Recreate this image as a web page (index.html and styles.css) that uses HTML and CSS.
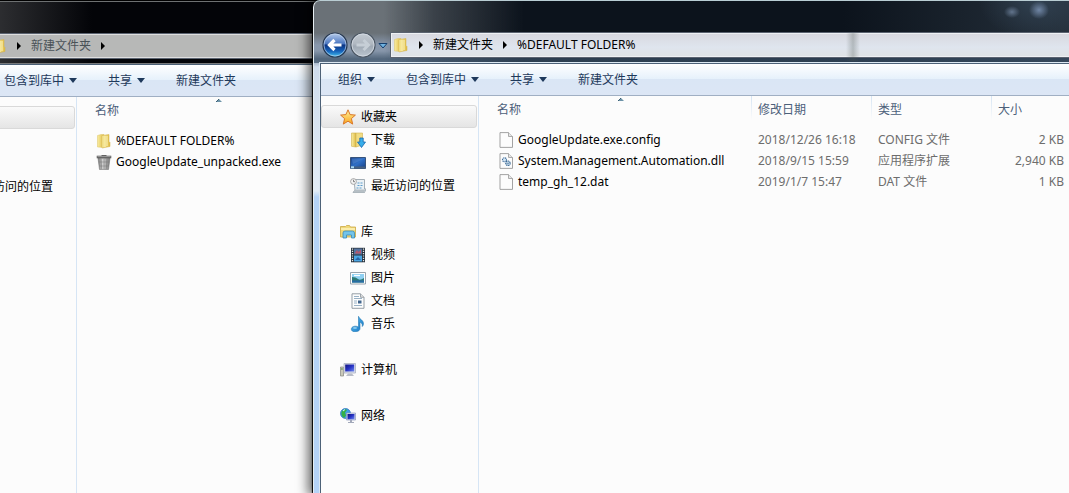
FILE: index.html
```html
<!DOCTYPE html>
<html lang="zh-CN">
<head>
<meta charset="utf-8">
<title>%DEFAULT FOLDER%</title>
<link rel="stylesheet" href="styles.css">
</head>
<body>
<svg class="defs" aria-hidden="true">
  <defs>
    <linearGradient id="gold" x1="0" x2="1"><stop offset="0" stop-color="#f9eda0"/><stop offset="1" stop-color="#dfba45"/></linearGradient>
    <linearGradient id="star" x1="0" y1="0" x2="0" y2="1"><stop offset="0" stop-color="#fff3a0"/><stop offset="1" stop-color="#f9a51c"/></linearGradient>
    <linearGradient id="screen" x1="0" y1="0" x2="1" y2="1"><stop offset="0" stop-color="#1a3f86"/><stop offset=".5" stop-color="#2f6fc6"/><stop offset="1" stop-color="#163c80"/></linearGradient>
    <linearGradient id="navy" x1="0" y1="0" x2="1" y2="1"><stop offset="0" stop-color="#10127e"/><stop offset=".5" stop-color="#2733c4"/><stop offset="1" stop-color="#6f8af0"/></linearGradient>
    <linearGradient id="bin" x1="0" x2="1"><stop offset="0" stop-color="#777"/><stop offset=".4" stop-color="#d4d4d4"/><stop offset="1" stop-color="#777"/></linearGradient>
    <linearGradient id="note" x1="0" y1="0" x2="1" y2="1"><stop offset="0" stop-color="#5cc0f2"/><stop offset="1" stop-color="#1574c4"/></linearGradient>
    <linearGradient id="orb" x1="0" y1="0" x2="0" y2="1"><stop offset="0" stop-color="#b9cdec"/><stop offset=".45" stop-color="#4a76c0"/><stop offset=".5" stop-color="#0b3382"/><stop offset=".75" stop-color="#1560b8"/><stop offset="1" stop-color="#45c4f2"/></linearGradient>
    <linearGradient id="orb-off" x1="0" y1="0" x2="0" y2="1"><stop offset="0" stop-color="#c3cad2"/><stop offset=".45" stop-color="#b0b8c1"/><stop offset=".55" stop-color="#9fa9b4"/><stop offset="1" stop-color="#bcc6d0"/></linearGradient>
    <symbol id="i-folder" viewBox="0 0 16 16"><path d="M1.500 2.500 5 1.500h3v13l-6.500-.5z" fill="url(#gold)" stroke="#dcc264" stroke-width=".5"/><path d="M6 2.500 13 1.500v7l1 1v4L6 15z" fill="url(#gold)" stroke="#d2b04a" stroke-width=".5"/><path d="M9 3v11M11 3v10" stroke="#fbf3b8" stroke-width="1"/></symbol>
    <symbol id="i-bin" viewBox="0 0 16 16"><path d="M2 4h12l-1.500 11.500h-9z" fill="url(#bin)" stroke="#777" stroke-width=".6"/><path d="M5 5l.7 10M8 5v10M11 5l-.7 10M3 8h10M3.500 12h9" stroke="#777" stroke-width=".5"/><path d="M.7 1.700h14.600v2.600H.7z" fill="#666"/><path d="M5.500 1h5v1h-5z" fill="#555"/><path d="M1.500 2.300h13" stroke="#bbb" stroke-width=".7"/></symbol>
    <symbol id="i-star" viewBox="0 0 16 16"><path d="M8 .8l2.100 4.800 5.300.5-4 3.500 1.300 5.500L8 12.200l-4.700 2.900 1.300-5.500-4-3.500 5.300-.5z" fill="url(#star)" stroke="#d9772a" stroke-linejoin="round"/></symbol>
    <symbol id="i-down" viewBox="0 0 16 16"><path d="M1.500 1H6v14l-4.500-.7z" fill="url(#gold)" stroke="#cfae4c" stroke-width=".6"/><path d="M6 1h6.500V13L6 15z" fill="#f1dc83" stroke="#d2b24c" stroke-width=".6"/><path d="M9.800 6h3.400v4h2.300l-4 5.500L7.500 10h2.300z" fill="#38aeea" stroke="#1766ac" stroke-width=".8"/></symbol>
    <symbol id="i-desktop" viewBox="0 0 16 16"><path d="M.5 2.500h15v11H.5z" fill="url(#screen)" stroke="#38547c"/><path d="M1 11.500h14v2H1z" fill="#47607f"/><path d="M1 11.300h3v2H1z" fill="#a8d8f4"/><path d="M1.500 3.500h13L3 9z" fill="#5f95dc" opacity=".4"/></symbol>
    <symbol id="i-recent" viewBox="0 0 16 16"><path d="M4 1.500h10.500v9.500H16l-1.500 3.500H3L5 12z" fill="#eaf1f5" stroke="#8f9ba3" stroke-width=".8"/><path d="M7.500 5h5M7.500 7.500h5M6.500 10h6" stroke="#5e9dcc" stroke-width="1.200" stroke-dasharray="2 1"/><path d="M3 14.500h11l1.500-3H5z" fill="#b6bfc5"/><circle cx="3.500" cy="3.500" r="2.900" fill="#f4f4f4" stroke="#949494" stroke-width=".8"/><path d="M3.500 1.800v1.900H5" fill="none" stroke="#555" stroke-width=".7"/></symbol>
    <symbol id="i-library" viewBox="0 0 16 16"><path d="M.5 2.500h5l1-1h3l1 1.500h5v10H.5z" fill="#f0d878" stroke="#cba844" stroke-width=".8"/><path d="M1 5h14" stroke="#fff5bd" stroke-width="1.500"/><path d="M3 14V9q0-2 2-2h7.500q2 0 2 2v5h-3v-3h-5v3z" fill="#74c4ea" stroke="#3b8bb8" stroke-width=".8"/></symbol>
    <symbol id="i-video" viewBox="0 0 16 16"><path d="M1 .8h14v14.500H1z" fill="#26303b"/><path d="M4 1.500h8v6H4z" fill="#54739f"/><path d="M4 8.500h8v6H4z" fill="#4aa5e3"/><path d="M5 6l2-3 1.500 2L11 2.500v4H5z" fill="#b4576c"/><path d="M5 13l3-3 3 3z" fill="#2565a7"/><path d="M2.500 1.500v14M13.500 1.500v14" stroke="#e0e6e9" stroke-width="1.300" stroke-dasharray="1.200 1.100"/></symbol>
    <symbol id="i-picture" viewBox="0 0 16 16"><path d="M.5 2.500h15v11.500H.5z" fill="#fff" stroke="#8e9aa4" stroke-width=".9"/><path d="M2 4h12v8.500H2z" fill="#8fd0f2"/><path d="M2 7q4 0 6 2t6-1v4.500H2z" fill="#2e7b76"/><path d="M2 10.500h12v2H2z" fill="#286ba4"/><path d="M4 5.500h6" stroke="#fff" stroke-width="1.300"/></symbol>
    <symbol id="i-doc" viewBox="0 0 16 16"><path d="M2 .8h8.500l3.500 3.500v11H2z" fill="#fdfdfd" stroke="#8b949c" stroke-width=".9"/><path d="M10.500.8v3.500H14" fill="#ddd" stroke="#8b949c" stroke-width=".8"/><path d="M4 3.500h5M4 5.500h8M4 8h3M4 10h3M4 12.500h8" stroke="#8fa9bf" stroke-width=".9"/><path d="M8 7.500h3.500v3H8z" fill="#41658d"/></symbol>
    <symbol id="i-music" viewBox="0 0 16 16"><path d="M8.500.3c.5 3 5 3.500 5 7.200 0 1.200-.4 2.200-1.200 3 .4-3-1.300-3.900-2.300-4.300v6.300c0 4-8.700 4.400-8.700.7 0-2.800 4-3.800 7.200-2.300z" fill="url(#note)" stroke="#2478b4" stroke-width=".6"/><ellipse cx="5" cy="12" rx="2" ry="1" fill="#a9def8" opacity=".7"/></symbol>
    <symbol id="i-computer" viewBox="0 0 16 16"><path d="M.5 5h3v9h-3z" fill="#cac9b9" stroke="#85867f" stroke-width=".7"/><path d="M1 7h1.800" stroke="#4b8b3a"/><path d="M4 1.500h11.500v9.500H4z" fill="#dcdfeb" stroke="#aab0c2" stroke-width=".8"/><path d="M5.200 2.500h9v7h-9z" fill="url(#navy)"/><path d="M8 11.500h4l2 2.500H6z" fill="#b9bdc8"/></symbol>
    <symbol id="i-network" viewBox="0 0 16 16"><circle cx="5.500" cy="5.500" r="5" fill="#3aa1e4" stroke="#2b6bbb" stroke-width=".7"/><path d="M2 3q3-3 5-1L5 4.500l1 3L4 10Q0 7 2 3z" fill="#35b046"/><path d="M3 3l2-1.500" stroke="#d9f6ff"/><path d="M6.500 5h9v7h-9z" fill="#d9dded" stroke="#8d98bd" stroke-width=".7"/><path d="M7.500 6h7v5.300h-7z" fill="url(#navy)"/><path d="M10 12h2v2h2v1H8v-1h2z" fill="#a3a9ba"/></symbol>
    <symbol id="i-file" viewBox="0 0 16 16"><path d="M2 .6h8.500L14.500 4.500v10.900H2z" fill="#fcfcfc" stroke="#999" stroke-width=".9"/><path d="M10.500.6v3.900h4" fill="#e6e6e6" stroke="#999" stroke-width=".8"/></symbol>
    <symbol id="i-dll" viewBox="0 0 16 16"><path d="M2 .6h8.500L14.500 4.500v10.900H2z" fill="#fcfcfc" stroke="#999" stroke-width=".9"/><path d="M10.500.6v3.900h4" fill="#e6e6e6" stroke="#999" stroke-width=".8"/><circle cx="6.500" cy="6.800" r="2" fill="#d6e6f4" stroke="#44719d" stroke-width="1.100" stroke-dasharray="1.200 .6"/><circle cx="10" cy="10.300" r="2.200" fill="#d6e6f4" stroke="#33638f" stroke-width="1.200" stroke-dasharray="1.200 .6"/><circle cx="10" cy="10.300" r=".7" fill="#33638f"/></symbol>
    <symbol id="i-back" viewBox="0 0 26 26"><circle cx="13" cy="13" r="12" fill="url(#orb)" stroke="#26374f" stroke-width="1.200"/><circle cx="13" cy="13" r="11" fill="none" stroke="#c8daf0" stroke-width=".8" opacity=".8"/><path d="M19.500 13H8M12.500 8L7.500 13l5 5" fill="none" stroke="#fff" stroke-width="3.200"/></symbol>
    <symbol id="i-fwd" viewBox="0 0 26 26"><circle cx="13" cy="13" r="12" fill="url(#orb-off)" stroke="#4a5562" stroke-width="1.200"/><circle cx="13" cy="13" r="11" fill="none" stroke="#d5dce4" stroke-width=".8"/><path d="M6.500 13H18M13.500 8l5 5-5 5" fill="none" stroke="#c6ced6" stroke-width="3"/></symbol>
    <symbol id="i-menu" viewBox="0 0 10 8"><path d="M1 1.500h8L5 6z" fill="#6fb2e0" stroke="#153f6e"/></symbol>
    <symbol id="i-caret" viewBox="0 0 8 5"><path d="M0 0h8L4 5z" fill="#1e395b"/></symbol>
    <symbol id="i-crumb" viewBox="0 0 4 8"><path d="M0 0l4 4-4 4z" fill="#000"/></symbol>
    <symbol id="i-sort" viewBox="0 0 8 4"><path d="M1 4L4 1l3 3z" fill="#6d93a8"/><path d="M1 4l3-3" stroke="#3c6075"/></symbol>
  </defs>
</svg>
<main class="desktop">
  <section class="window window-back" aria-label="新建文件夹">
    <header class="glass">
      <nav class="address" aria-label="地址">
        <svg class="icon"><use href="#i-folder"/></svg>
        <svg class="crumb"><use href="#i-crumb"/></svg>
        <button>新建文件夹</button>
        <svg class="crumb"><use href="#i-crumb"/></svg>
      </nav>
    </header>
    <div class="client">
      <div class="toolbar">
        <button>包含到库中<svg><use href="#i-caret"/></svg></button>
        <button>共享<svg><use href="#i-caret"/></svg></button>
        <button>新建文件夹</button>
      </div>
      <div class="panes">
        <nav class="sidebar" aria-label="导航">
          <ul>
            <li><button class="root selected" aria-label="收藏夹"><svg class="icon"><use href="#i-star"/></svg></button></li>
            <li><button aria-label="下载"><svg class="icon"><use href="#i-down"/></svg></button></li>
            <li><button aria-label="桌面"><svg class="icon"><use href="#i-desktop"/></svg></button></li>
            <li><button><svg class="icon"><use href="#i-recent"/></svg>最近访问的位置</button></li>
          </ul>
        </nav>
        <div class="files">
          <table>
            <thead><tr><th class="name sorted">名称<svg class="sort"><use href="#i-sort"/></svg></th></tr></thead>
            <tbody>
              <tr><td class="file"><svg class="icon"><use href="#i-folder"/></svg>%DEFAULT FOLDER%</td></tr>
              <tr><td class="file"><svg class="icon"><use href="#i-bin"/></svg>GoogleUpdate_unpacked.exe</td></tr>
            </tbody>
          </table>
        </div>
      </div>
    </div>
  </section>

  <section class="window window-front" aria-label="%DEFAULT FOLDER%">
    <header class="glass">
      <button class="orb" aria-label="返回"><svg><use href="#i-back"/></svg></button>
      <button class="orb" aria-label="前进"><svg><use href="#i-fwd"/></svg></button>
      <button class="history" aria-label="历史"><svg><use href="#i-menu"/></svg></button>
      <nav class="address" aria-label="地址">
        <svg class="icon"><use href="#i-folder"/></svg>
        <svg class="crumb"><use href="#i-crumb"/></svg>
        <button>新建文件夹</button>
        <svg class="crumb"><use href="#i-crumb"/></svg>
        <button>%DEFAULT FOLDER%</button>
      </nav>
    </header>
    <div class="client">
      <div class="toolbar">
        <button>组织<svg><use href="#i-caret"/></svg></button>
        <button>包含到库中<svg><use href="#i-caret"/></svg></button>
        <button>共享<svg><use href="#i-caret"/></svg></button>
        <button>新建文件夹</button>
      </div>
      <div class="panes">
        <nav class="sidebar" aria-label="导航">
          <ul>
            <li><button class="root selected"><svg class="icon"><use href="#i-star"/></svg>收藏夹</button></li>
            <li><button><svg class="icon"><use href="#i-down"/></svg>下载</button></li>
            <li><button><svg class="icon"><use href="#i-desktop"/></svg>桌面</button></li>
            <li><button><svg class="icon"><use href="#i-recent"/></svg>最近访问的位置</button></li>
          </ul>
          <ul>
            <li><button class="root"><svg class="icon"><use href="#i-library"/></svg>库</button></li>
            <li><button><svg class="icon"><use href="#i-video"/></svg>视频</button></li>
            <li><button><svg class="icon"><use href="#i-picture"/></svg>图片</button></li>
            <li><button><svg class="icon"><use href="#i-doc"/></svg>文档</button></li>
            <li><button><svg class="icon"><use href="#i-music"/></svg>音乐</button></li>
          </ul>
          <ul>
            <li><button class="root"><svg class="icon"><use href="#i-computer"/></svg>计算机</button></li>
          </ul>
          <ul>
            <li><button class="root"><svg class="icon"><use href="#i-network"/></svg>网络</button></li>
          </ul>
        </nav>
        <div class="files">
          <table>
            <thead><tr><th class="name sorted">名称<svg class="sort"><use href="#i-sort"/></svg></th><th class="date">修改日期</th><th class="type">类型</th><th>大小</th></tr></thead>
            <tbody>
              <tr><td class="file"><svg class="icon"><use href="#i-file"/></svg>GoogleUpdate.exe.config</td><td>2018/12/26 16:18</td><td>CONFIG 文件</td><td class="size">2 KB</td></tr>
              <tr><td class="file"><svg class="icon"><use href="#i-dll"/></svg>System.Management.Automation.dll</td><td>2018/9/15 15:59</td><td>应用程序扩展</td><td class="size">2,940 KB</td></tr>
              <tr><td class="file"><svg class="icon"><use href="#i-file"/></svg>temp_gh_12.dat</td><td>2019/1/7 15:47</td><td>DAT 文件</td><td class="size">1 KB</td></tr>
            </tbody>
          </table>
        </div>
      </div>
    </div>
  </section>
</main>
</body>
</html>
```

FILE: styles.css
```css
* {
  box-sizing: border-box;
}

body {
  margin: 0;
  background: #000;
  color: #000;
  font: 12px/16px "Noto Sans", "Noto Sans CJK SC", sans-serif;
}

button {
  display: flex;
  align-items: center;
  padding: 0;
  border: 0;
  background: none;
  color: inherit;
  font: inherit;
  white-space: nowrap;
}

svg {
  display: block;
  flex: none;
}

.defs {
  position: absolute;
  width: 0;
  height: 0;
}

.icon {
  width: 16px;
  height: 16px;
}

.desktop {
  position: relative;
  height: 100vh;
  overflow: hidden;
}

/* Windows */
.window {
  position: absolute;
  right: 0;
  bottom: 0;
  display: flex;
  flex-direction: column;
  padding-left: 6px;
  border-top: 1px solid #b9cdd3;
  border-left: 1px solid #e6eef2;
}

.window-back {
  top: 1px;
  left: -89px;
  border-top-color: #6d7071;
  background: linear-gradient(90deg, #303134 80px, #030408 180px);
}

.window-front {
  top: 0;
  left: 313px;
  border-radius: 7px 0 0;
  background: linear-gradient(#6a7177 32px, #8897ac 44px, #8696a9 58px, #cfdcec 66px, #e2ecf6 190px, #b5d3f7 196px);
  box-shadow: -1px 0 1px #000, -2px 0 12px 3px rgba(0, 0, 0, .6);
}

.glass {
  display: flex;
  align-items: flex-end;
  height: 62px;
  margin-left: -6px;
  padding: 0 0 6px 8px;
}

.window-back .glass {
  padding-left: 77px;
}

.window-front .glass {
  border-radius: 6px 0 0;
  background:
    radial-gradient(ellipse 8px 6px at calc(100% - 57px) 11px, #62748c, transparent),
    radial-gradient(ellipse 10px 9px at calc(100% - 30px) 9px, #7086a5, transparent),
    radial-gradient(ellipse 60px 40px at calc(100% - 30px) 0, #304050, transparent),
    linear-gradient(transparent 50px, rgba(60, 82, 104, .7) 58px),
    linear-gradient(90deg, transparent 70px, rgba(12, 19, 28, .5) 120px, #0c131c 210px, #0c131c 70%, #25303b);
}

.orb,
.history {
  flex: none;
  margin-bottom: -1px;
}

.orb svg {
  width: 26px;
  height: 26px;
}

.orb + .orb {
  margin-left: 2px;
}

.history {
  height: 24px;
  margin-left: 2px;
}

.history svg {
  width: 10px;
  height: 8px;
}

.address {
  display: flex;
  flex: 1;
  align-items: center;
  gap: 10px;
  height: 24px;
  margin-left: 3px;
  padding-left: 1px;
  border: 1px solid #eef1f4;
  border-right: 0;
  outline: 1px solid #5b6370;
  background: linear-gradient(#d8d9e0, #dfe5ee 60%, #dfe3e6);
}

.window-back .address {
  margin-left: 0;
  border-color: #dedede;
  background: #b7b8b7;
  color: #4a5257;
}

.window-front .address::after {
  content: "";
  position: absolute;
  top: 32px;
  right: calc(100% - 546px);
  width: 14px;
  height: 28px;
  background: linear-gradient(90deg, transparent, rgba(75, 85, 80, .3), transparent);
}

.crumb {
  width: 4px;
  height: 8px;
}

.client {
  display: flex;
  flex: 1;
  flex-direction: column;
  border: solid #4c6177;
  border-width: 1px 0 0 1px;
  outline: 1px solid #dce8f2;
  background: #fcfcfc;
}

.window-back .client {
  outline-color: #77797b;
}

.toolbar {
  display: flex;
  gap: 31px;
  height: 32px;
  padding-left: 17px;
  border-bottom: 1px solid #a0afc3;
  background: linear-gradient(#fff, #e6f1fb 48%, #dae6f5 50%, #dce6f5);
  color: #1e395b;
}

.window-back .toolbar {
  padding-left: 85px;
}

.toolbar button {
  gap: 5px;
}

.toolbar svg {
  width: 8px;
  height: 5px;
}

.panes {
  display: flex;
  flex: 1;
}

/* Navigation pane */
.sidebar {
  flex: none;
  width: 158px;
  padding: 9px 1px 0 0;
  border-right: 1px solid #d6e5f5;
}

.sidebar ul {
  margin: 0 0 23px;
  padding: 0;
  list-style: none;
}

.sidebar button {
  gap: 5px;
  width: 100%;
  height: 23px;
  padding-left: 29px;
}

.sidebar .root {
  padding-left: 19px;
}

.sidebar .selected {
  padding-left: 18px;
  border: 1px solid #d9d9d9;
  border-radius: 3px;
  background: linear-gradient(#fafafa, #e5e5e5);
}

/* File list */
.files {
  flex: 1;
  padding-left: 12px;
}

table {
  width: 100%;
  border-collapse: collapse;
  table-layout: fixed;
}

th {
  position: relative;
  height: 24px;
  padding: 4px 0 0 6px;
  background: linear-gradient(#d5e4f3, #fcfcfc) right / 1px 100% no-repeat;
  color: #4c607a;
  font-weight: 400;
  text-align: left;
}

th:last-child {
  background: none;
}

.name {
  width: 261px;
}

.date,
.type {
  width: 120px;
}

.sort {
  position: absolute;
  top: 1px;
  left: 126px;
  width: 8px;
  height: 4px;
}

tbody::before {
  content: "";
  display: block;
  height: 9px;
}

td {
  height: 21px;
  padding: 0 0 0 6px;
  color: #6d6d6d;
  white-space: nowrap;
}

.file {
  display: flex;
  align-items: center;
  gap: 4px;
  padding-left: 7px;
  color: #000;
}

.size {
  padding-right: 5px;
  text-align: right;
}
```
